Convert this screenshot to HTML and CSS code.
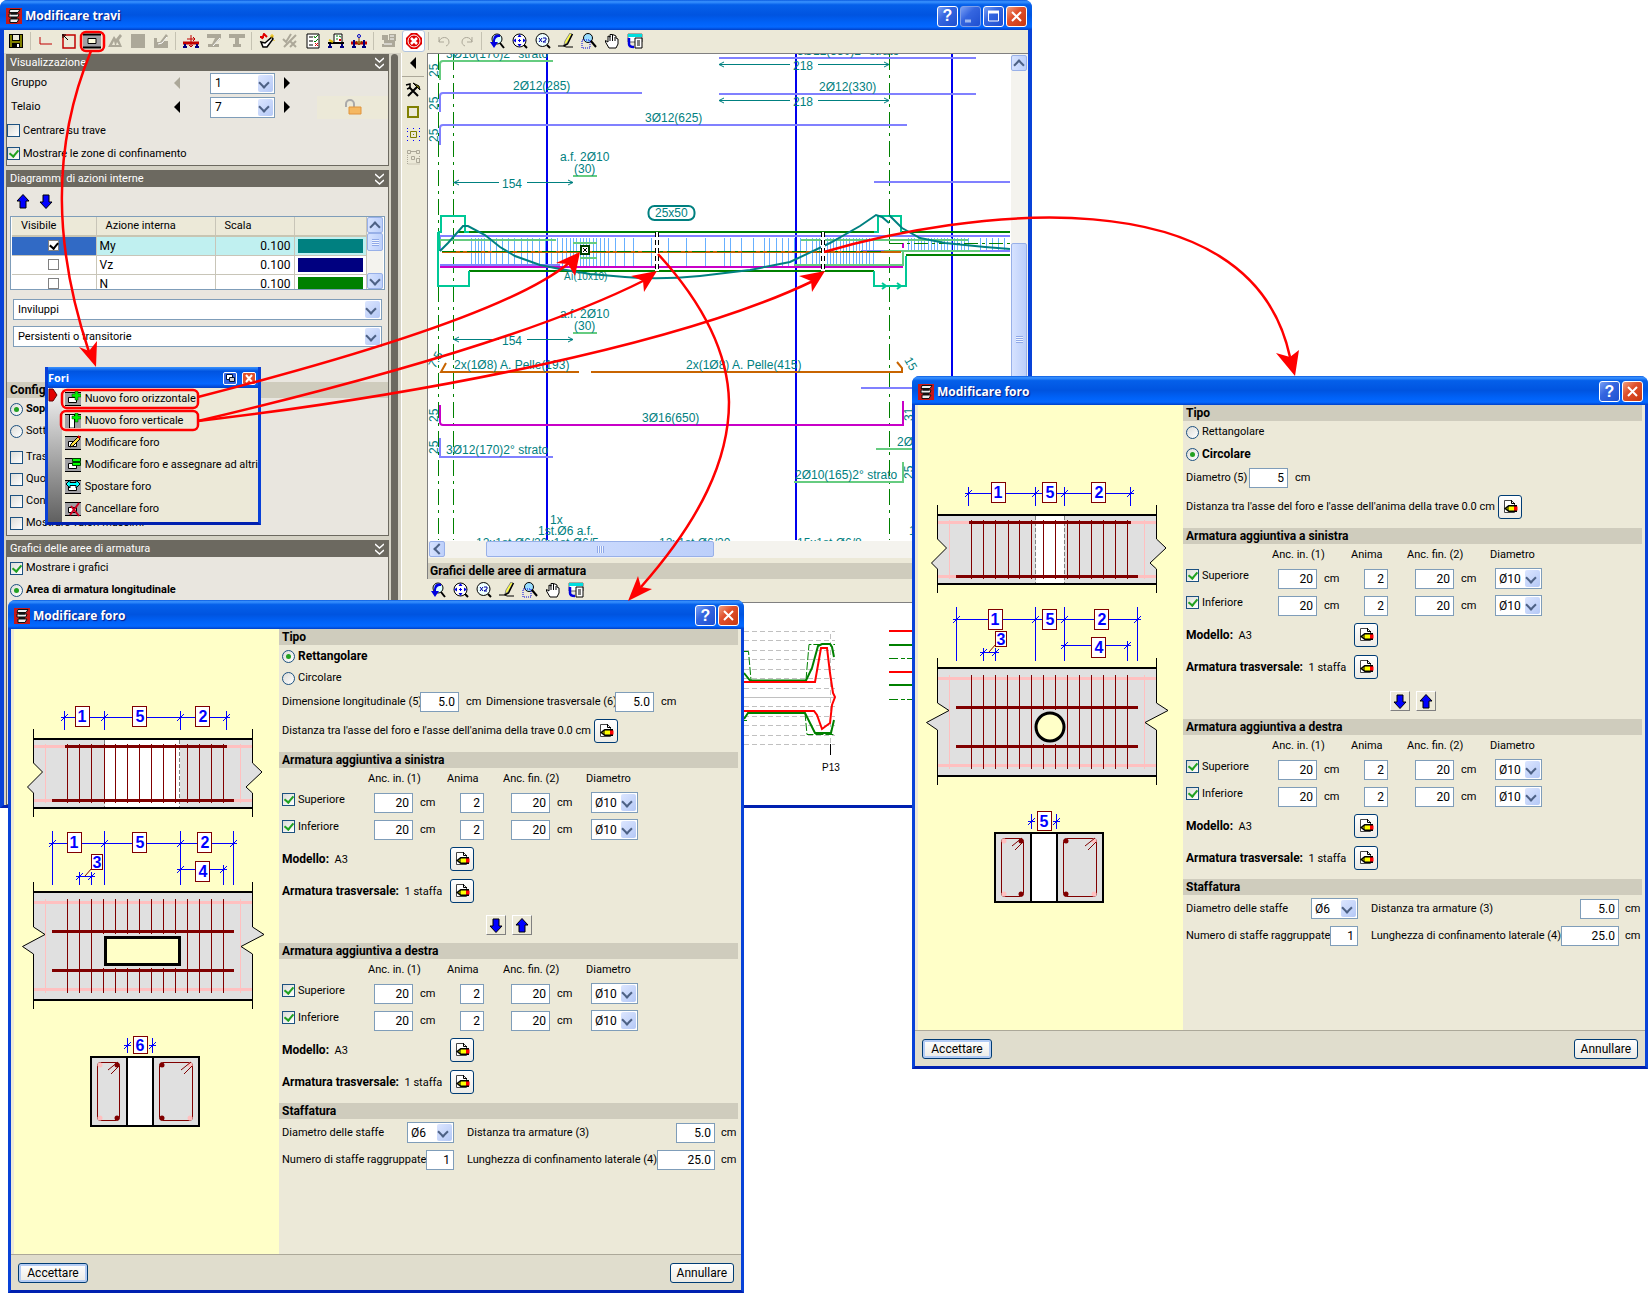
FILE: index.html
```html
<!DOCTYPE html>
<html lang="it">
<head>
  <meta charset="UTF-8">
  <meta name="viewport" content="width=device-width, initial-scale=1.0">
  <title>Modificare travi</title>
  <link rel="stylesheet" href="styles.css">
</head>
<body>

<!-- shared icons and drawing parts -->
<svg class="defs" width="0" height="0" aria-hidden="true">
  <defs>
    <symbol id="i-app" viewBox="0 0 16 16"><rect width="16" height="16" fill="#c81818"/><path d="M4 1.500h10l-2 3H3zM3 6h10l-1 3H3zM4 11h9l-2 3.500H4z" fill="#eee" stroke="#111"/><path d="M5 5.500h6M5 10h6" stroke="#111" stroke-width="2"/></symbol>
    <symbol id="i-save" viewBox="0 0 16 16"><path d="M1 1h14v14H1z" fill="#000"/><path d="M2 2h2v6h8V2h2v12h-2v-4H4v4H2z" fill="#808000"/><path d="M5 2h6v5H5z" fill="#ece9d8"/><path d="M9 11h2v3H9z" fill="#fff"/></symbol>
    <symbol id="i-ell" viewBox="0 0 16 16"><path d="M2 4v7h12" fill="none" stroke="#c00000"/></symbol>
    <symbol id="i-panel" viewBox="0 0 16 16"><path d="M2 2h12v13H2z" fill="none" stroke="#c00000" stroke-width="1.500"/><path d="M1 2h4M2 1v4M3 3l4 4" stroke="#000"/></symbol>
    <symbol id="i-hole" viewBox="0 0 18 16"><path d="M0 1h18v14H0z" fill="#a0a0a4"/><path d="M0 1.500h18M0 14.500h18" stroke="#000" stroke-width="2"/><path d="M5 5.500h8v5H5z" fill="#ffffe0" stroke="#000"/></symbol>
    <symbol id="i-g1" viewBox="0 0 16 16"><path d="M1 14L7 3l2 3 4-5 2 2-3 4 3 7zM5 12h3l-1-4zM10 9l-1 3h3z" fill="#aca899" fill-rule="evenodd"/></symbol>
    <symbol id="i-g2" viewBox="0 0 16 16"><path d="M1 1h14v14H1z" fill="#aca899"/></symbol>
    <symbol id="i-g3" viewBox="0 0 16 16"><path d="M1 5h3v4h3l6-8 2 2-4 5h4v7H1z" fill="#aca899"/><path d="M5 11l4-1 5-6" stroke="#fff" fill="none"/></symbol>
    <symbol id="i-beam" viewBox="0 0 16 16"><path d="M0 10h16" stroke="#c00000" stroke-width="3"/><path d="M2 11v3M0 14h4M14 11v3M12 14h4" stroke="#000080" stroke-width="2"/><path d="M8 2v12M4 6h7M10 4l2 2-2 2M6 12l2 2 2-2" stroke="#c00000" fill="none"/></symbol>
    <symbol id="i-g4" viewBox="0 0 16 16"><path d="M1 1h14v4l-6 6h4v3H2v-3h4l3-6H1z" fill="#aca899"/><path d="M7 13L14 5" stroke="#fff"/></symbol>
    <symbol id="i-g5" viewBox="0 0 16 16"><path d="M0 1h16v4h-6v6h2v3H4v-3h2V5H0z" fill="#aca899"/></symbol>
    <symbol id="i-wand" viewBox="0 0 16 16"><path d="M2 9l4 1 7-6 1 2-6 8H4z" fill="#fff" stroke="#000" stroke-width="1.500"/><path d="M3 6l2-5 3 3M1 4h4" stroke="#e00000" stroke-width="2" fill="none"/><path d="M13 1v4M11 3h4M15 7v1" stroke="#f0c000"/></symbol>
    <symbol id="i-g6" viewBox="0 0 16 16"><path d="M1 6l3 3 5-8M2 14L14 2M8 8l6 6M14 8l-6 6" stroke="#aca899" stroke-width="2" fill="none"/></symbol>
    <symbol id="i-list" viewBox="0 0 16 16"><path d="M2 1h12v14H2z" fill="#fff" stroke="#000"/><path d="M4 4h4M4 8h4M4 12h4" stroke="#000"/><path d="M9 3l1 2 3-3M9 8l1 1 3-3" stroke="#008000" fill="none"/><path d="M10 10l3 3M13 10l-3 3" stroke="#e00000"/></symbol>
    <symbol id="i-list2" viewBox="0 0 16 16"><path d="M6 1h8v9H6z" fill="#fff" stroke="#000"/><path d="M8 3h2M8 6h2M11 3l2 1" stroke="#008000"/><path d="M11 6l2 2M13 6l-2 2" stroke="#e00000"/><path d="M0 10h16" stroke="#000" stroke-width="2"/><path d="M2 11v3M0 14h4M14 11v3M12 14h4" stroke="#000080" stroke-width="2"/><path d="M1 7l4 2" stroke="#e0c000" stroke-width="2"/></symbol>
    <symbol id="i-load" viewBox="0 0 16 16"><path d="M0 10h16" stroke="#c00000" stroke-width="3"/><path d="M3 7v7M13 7v7M1 14h4M11 14h4" stroke="#000080" stroke-width="2"/><path d="M8 5v7M5 8l3 4 3-4" stroke="#804000" fill="#c0a040"/><circle cx="8" cy="3" r="1.500" fill="none" stroke="#0000c0"/></symbol>
    <symbol id="i-g7" viewBox="0 0 16 16"><path d="M1 2h6v5h7v7H1v-3h2V7H1zM8 1h7v7H8z" fill="#aca899"/><path d="M9 3h4M9 6h4M3 11h8" stroke="#fff"/></symbol>
    <symbol id="i-stop" viewBox="0 0 16 16"><path d="M5 0h6l5 5v6l-5 5H5l-5-5V5z" fill="#e00000"/><circle cx="8" cy="8" r="6" fill="none" stroke="#fff"/><path d="M5 5l6 6M11 5l-6 6" stroke="#fff" stroke-width="2.500"/></symbol>
    <symbol id="i-undo" viewBox="0 0 16 16"><path d="M3 4v5h5M3 9c1-6 10-6 10 0 0 2-1 3-3 4" stroke="#aca899" fill="none"/></symbol>
    <symbol id="i-redo" viewBox="0 0 16 16"><path d="M13 4v5H8M13 9C12 3 3 3 3 9c0 2 1 3 3 4" stroke="#aca899" fill="none"/></symbol>
    <symbol id="i-zprev" viewBox="0 0 16 16"><circle cx="8" cy="6" r="5" fill="#dff" stroke="#000"/><path d="M11 10l4 5" stroke="#000" stroke-width="2"/><path d="M11 2C5 0 4 5 4 9H1l4 6 4-6H6c0-3 1-5 5-5z" fill="#0000e0"/></symbol>
    <symbol id="i-zall" viewBox="0 0 16 16"><circle cx="7.500" cy="7.500" r="6.500" fill="#fff" stroke="#000"/><path d="M12 12l3 3" stroke="#000" stroke-width="2"/><path d="M7.500 1l2 3h-4zM7.500 14l2-3h-4zM1 7.500l3-2v4zM14 7.500l-3-2v4z" fill="#0000e0"/><path d="M6 7.500h3M7.500 6v3" stroke="#0000e0"/></symbol>
    <symbol id="i-z2" viewBox="0 0 16 16"><circle cx="7.500" cy="7" r="6.500" fill="#eff" stroke="#000"/><path d="M12 12l3 3" stroke="#000" stroke-width="2"/><path d="M4 5l3 4M7 5L4 9M8 5h3v2L8 9h3" stroke="#0000a0" fill="none"/></symbol>
    <symbol id="i-pen" viewBox="0 0 16 16"><path d="M12 0l2 1-5 9-3 2 1-4z" fill="#ffff40" stroke="#888"/><path d="M14.500 1l-5 10-4 2" stroke="#000" stroke-width="1.500" fill="none"/><path d="M0 13h6l2 1h7" stroke="#000" fill="none"/></symbol>
    <symbol id="i-zwin" viewBox="0 0 16 16"><circle cx="7" cy="5" r="4.500" fill="#9df" stroke="#000"/><path d="M10 8l5 6" stroke="#000" stroke-width="2"/><path d="M1 7h8v8H1z" fill="none" stroke="#0000e0" stroke-dasharray="1 1"/></symbol>
    <symbol id="i-hand" viewBox="0 0 16 16"><path d="M5 15L1.500 9V7.500L4 9V3l2 1V1.500h2l2 .500 2 1v2l2 1v5l-2 4z" fill="#fff" stroke="#000"/><path d="M6 3v5M8.500 2v6M11 4v4" stroke="#000"/></symbol>
    <symbol id="i-win" viewBox="0 0 16 16"><path d="M1 1h14v8H1z" fill="#fff" stroke="#666"/><path d="M1 1h14v3H1z" fill="#00dede"/><path d="M8 5h7v10H8z" fill="#fff" stroke="#000"/><path d="M10 8h3M10 10h3M10 12h3" stroke="#000"/><path d="M2 5v6c0 3 3 3 5 3" stroke="#0000e0" stroke-width="2.500" fill="none"/></symbol>
    <symbol id="i-edit" viewBox="0 0 16 16"><path d="M2.500 1.500h7l3 3v9h-10z" fill="#fff" stroke="#444"/><path d="M9.500 1v3.500H13" fill="none" stroke="#000"/><path d="M2 9.500L6.500 6H15v7H6.500z" fill="#000"/><path d="M7 7.500h5v4H7z" fill="#ff0"/><path d="M12 7.500h3.500v4H12z" fill="#f00"/><path d="M4 9.500l3-2v4z" fill="#808000"/></symbol>
    <symbol id="i-up" viewBox="0 0 14 15"><path d="M7 .500L13 7h-3v7H4V7H1z" fill="#00f" stroke="#000"/></symbol>
    <symbol id="i-down" viewBox="0 0 14 15"><path d="M7 14.500L1 8h3V1h6v7h3z" fill="#00f" stroke="#000"/></symbol>
    <symbol id="i-base" viewBox="0 0 16 16"><path d="M0 1h16v14H0z" fill="#a0a0a4"/><path d="M0 1.500h16M0 14.500h16" stroke="#000"/><path d="M3.500 6.500h8v5h-8z" fill="#fff" stroke="#000"/></symbol>
    <symbol id="i-plus" viewBox="0 0 16 16"><path d="M10 0h3v3h3v3h-3v3h-3V6H7V3h3z" fill="#0e0" stroke="#004000" stroke-width=".5"/></symbol>
    <symbol id="i-fold" viewBox="0 0 9 12"><path d="M0 1l4.500 4L9 1M0 7l4.500 4L9 7" fill="none" stroke="#fff" stroke-width="1.500"/></symbol>
    <symbol id="i-close" viewBox="0 0 19 19"><path d="M5 5l9 9M14 5l-9 9" stroke="#fff" stroke-width="2"/></symbol>

    <g id="beam-top">
      <path d="M33.500 739H252.500V763L262 772L246 787L252.500 793V808H33.500V793L27.500 787L42.500 772L33.500 763z" fill="#e0e0e0"/>
      <path d="M34 746.500H252M34 800.500H252" stroke="#ffc0c0" stroke-width="3"/>
      <path d="M45.500 744V803M240.500 744V803" stroke="#ffc0c0"/>
    </g>
    <g id="beam-top-bars">
      <path d="M67.500 744V803M79.500 744V803M91.500 744V803M104.500 744V803M115.500 744V803M127.500 744V803M139.500 744V803M151.500 744V803M163.500 744V803M175.500 744V803M187.500 744V803M199.500 744V803M211.500 744V803M223.500 744V803" stroke="#800000"/>
      <path d="M65 746.500H227M52 800.500H234" stroke="#800000" stroke-width="3"/>
      <path d="M33 739H253M33 808H253" stroke="#000" stroke-width="2"/>
      <path d="M33.500 729V763L42.500 772L27.500 787L33.500 793V817M252.500 729V763L262 772L246 787L252.500 793V817" fill="none" stroke="#000"/>
    </g>
    <g id="beam-side">
      <path d="M33.500 892H252.500V927L264 934.500L241 946.500L252.500 954V1000H33.500V954L22.500 946.500L45 934.500L33.500 927z" fill="#e0e0e0"/>
      <path d="M34 902.500H252M34 989.500H252" stroke="#ffc0c0" stroke-width="3"/>
      <path d="M45.500 899V993M240.500 899V993" stroke="#ffc0c0"/>
      <path d="M67.500 899V993M79.500 899V993M91.500 899V993M187.500 899V993M199.500 899V993M211.500 899V993M223.500 899V993" stroke="#800000"/>
      <path d="M139.500 899V934M151.500 899V934M139.500 968V993M151.500 968V993" stroke="#800000"/>
      <path d="M52 931.500H234M52 970.500H234" stroke="#800000" stroke-width="3"/>
      <path d="M33 892H253M33 1000H253" stroke="#000" stroke-width="2"/>
      <path d="M33.500 882V927L45 934.500L22.500 946.500L33.500 954V1009M252.500 882V927L264 934.500L241 946.500L252.500 954V1009" fill="none" stroke="#000"/>
      <path d="M76 876.500H95M79.500 872V885M91.500 872V885M76 880l7-7M88 880l7-7" stroke="#00f"/>
      <path d="M85 876L92 868" stroke="#800000"/>
    </g>
    <g id="section">
      <path d="M91 1057H199V1126H91z" fill="#e0e0e0" stroke="#000" stroke-width="2"/>
      <path d="M127 1057H153V1126H127z" fill="#fff" stroke="#000" stroke-width="2"/>
      <rect x="97.500" y="1062.500" width="22" height="58" rx="3" fill="none" stroke="#800000"/>
      <rect x="159.500" y="1062.500" width="33" height="58" rx="3" fill="none" stroke="#800000"/>
      <g fill="#ffc0c0"><circle cx="100" cy="1065" r="2.500"/><circle cx="100" cy="1118" r="2.500"/><circle cx="190" cy="1065" r="2.500"/><circle cx="190" cy="1118" r="2.500"/></g>
      <g fill="#800000"><circle cx="117" cy="1065" r="2.500"/><circle cx="117" cy="1118" r="2.500"/><circle cx="162" cy="1065" r="2.500"/><circle cx="162" cy="1118" r="2.500"/></g>
      <path d="M118 1062L108 1070M119 1066L111 1074M191 1062L181 1070M192 1066L184 1074" stroke="#800000"/>
      <path d="M127.500 1038V1053M152.500 1038V1053M124 1045.500H131M149 1045.500H156M124 1049l7-7M149 1049l7-7" stroke="#00f"/>
    </g>
  </defs>
</svg>

<main class="desktop">

  <!-- main window -->
  <section class="window main-window">
    <header class="titlebar">
      <svg class="app-icon"><use href="#i-app"/></svg>
      <h1>Modificare travi</h1>
      <button class="caption-btn" aria-label="Aiuto">?</button>
      <button class="caption-btn dim-btn" aria-label="Riduci"><svg width="19" height="19"><path d="M4 14h6" stroke="#9db8f0" stroke-width="3"/></svg></button>
      <button class="caption-btn" aria-label="Ingrandisci"><svg width="19" height="19"><path d="M4.500 5h10v9h-10z" fill="none" stroke="#fff"/><path d="M4 5h11" stroke="#fff" stroke-width="3"/></svg></button>
      <button class="caption-btn close" aria-label="Chiudi"><svg width="19" height="19"><use href="#i-close"/></svg></button>
    </header>

    <div class="toolbar top-toolbar">
      <button aria-label="Salva"><svg><use href="#i-save"/></svg></button>
      <i class="sep"></i>
      <button aria-label="Linea"><svg><use href="#i-ell"/></svg></button>
      <button aria-label="Pannello"><svg><use href="#i-panel"/></svg></button>
      <button aria-label="Fori"><svg class="wide"><use href="#i-hole"/></svg></button>
      <button aria-label="Sezione" disabled><svg><use href="#i-g1"/></svg></button>
      <button aria-label="Area" disabled><svg><use href="#i-g2"/></svg></button>
      <button aria-label="Modifica" disabled><svg><use href="#i-g3"/></svg></button>
      <i class="sep"></i>
      <button aria-label="Trave"><svg><use href="#i-beam"/></svg></button>
      <button aria-label="Profilo" disabled><svg><use href="#i-g4"/></svg></button>
      <button aria-label="Appoggio" disabled><svg><use href="#i-g5"/></svg></button>
      <i class="sep"></i>
      <button aria-label="Dimensionare"><svg><use href="#i-wand"/></svg></button>
      <button aria-label="Verificare" disabled><svg><use href="#i-g6"/></svg></button>
      <button aria-label="Elenco"><svg><use href="#i-list"/></svg></button>
      <button aria-label="Elenco travi"><svg><use href="#i-list2"/></svg></button>
      <button aria-label="Carichi"><svg><use href="#i-load"/></svg></button>
      <i class="sep"></i>
      <button aria-label="Stampa" disabled><svg><use href="#i-g7"/></svg></button>
      <button class="stop" aria-label="Errori"><svg><use href="#i-stop"/></svg></button>
      <i class="sep"></i>
      <button aria-label="Annulla" disabled><svg><use href="#i-undo"/></svg></button>
      <button aria-label="Ripeti" disabled><svg><use href="#i-redo"/></svg></button>
      <i class="sep"></i>
      <button aria-label="Vista precedente"><svg><use href="#i-zprev"/></svg></button>
      <button aria-label="Vista completa"><svg><use href="#i-zall"/></svg></button>
      <button aria-label="Zoom x2"><svg><use href="#i-z2"/></svg></button>
      <button aria-label="Ridisegna"><svg><use href="#i-pen"/></svg></button>
      <button aria-label="Zoom finestra"><svg><use href="#i-zwin"/></svg></button>
      <button aria-label="Sposta"><svg><use href="#i-hand"/></svg></button>
      <button aria-label="Finestre"><svg><use href="#i-win"/></svg></button>
    </div>

    <div class="workspace">
      <aside class="sidebar">
        <div class="groups">
          <section class="group">
            <h2>Visualizzazione <svg width="9" height="12"><use href="#i-fold"/></svg></h2>
            <div class="nav-row">
              <label for="gruppo">Gruppo</label>
              <button class="prev off" aria-label="Gruppo precedente"></button>
              <span class="combo"><select id="gruppo"><option>1</option></select></span>
              <button class="next" aria-label="Gruppo successivo"></button>
            </div>
            <div class="nav-row">
              <label for="telaio">Telaio</label>
              <button class="prev" aria-label="Telaio precedente"></button>
              <span class="combo"><select id="telaio"><option>7</option></select></span>
              <button class="next" aria-label="Telaio successivo"></button>
              <button class="lock" aria-label="Blocca"><svg width="18" height="16"><path d="M2 8V5a4 4 0 0 1 8 0v3" fill="none" stroke="#aaa" stroke-width="2"/><path d="M5 8h12v7H5z" fill="#f5b860" stroke="#e0943c"/></svg></button>
            </div>
            <label class="check"><input type="checkbox">Centrare su trave</label>
            <label class="check"><input type="checkbox" checked>Mostrare le zone di confinamento</label>
          </section>

          <section class="group">
            <h2>Diagrammi di azioni interne <svg width="9" height="12"><use href="#i-fold"/></svg></h2>
            <div class="order">
              <button aria-label="Su"><svg width="14" height="15"><use href="#i-up"/></svg></button>
              <button aria-label="Giù"><svg width="14" height="15"><use href="#i-down"/></svg></button>
            </div>
            <div class="table-box">
              <div class="table-view">
                <table>
                  <thead><tr><th>Visibile</th><th>Azione interna</th><th>Scala</th><th></th></tr></thead>
                  <tbody>
                    <tr class="selected"><td><input type="checkbox" aria-label="My" checked></td><td>My</td><td>0.100</td><td><i class="c-teal"></i></td></tr>
                    <tr><td><input type="checkbox" aria-label="Vz"></td><td>Vz</td><td>0.100</td><td><i class="c-navy"></i></td></tr>
                    <tr><td><input type="checkbox" aria-label="N"></td><td>N</td><td>0.100</td><td><i class="c-green"></i></td></tr>
                  </tbody>
                </table>
              </div>
              <div class="scroll-v"><b class="arrow up"></b><b class="thumb small"></b><b class="arrow down"></b></div>
            </div>
            <span class="combo long"><select aria-label="Tipo di risultati"><option>Inviluppi</option></select></span>
            <span class="combo long"><select aria-label="Situazione"><option>Persistenti o transitorie</option></select></span>
            <h3>Config</h3>
            <div class="config">
              <label class="check on"><input type="radio" name="pos" checked>Sop</label>
              <label class="check"><input type="radio" name="pos">Sott</label>
            </div>
            <div class="config checks">
              <label class="check"><input type="checkbox">Tras</label>
              <label class="check"><input type="checkbox">Quo</label>
              <label class="check"><input type="checkbox">Con</label>
              <label class="check"><input type="checkbox">Mostrare valori massimi</label>
            </div>
          </section>

          <section class="group last">
            <h2>Grafici delle aree di armatura <svg width="9" height="12"><use href="#i-fold"/></svg></h2>
            <div class="config">
              <label class="check"><input type="checkbox" checked>Mostrare i grafici</label>
              <label class="check on"><input type="radio" name="area" checked>Area di armatura longitudinale</label>
            </div>
          </section>
        </div>
        <div class="side-scroll"></div>
      </aside>

      <nav class="side-tools">
        <button aria-label="Nascondi"><svg width="16" height="16"><path d="M11 2v12L5 8z"/></svg></button>
        <hr>
        <button aria-label="Configurazione"><svg width="16" height="16"><path d="M3 14L13 4M13 14L4 5" stroke="#000" stroke-width="2"/><path d="M8 1l6 3 1 4-3-3z" fill="#808000" stroke="#000"/><path d="M1 3l4-1v4L2 7" fill="none" stroke="#000" stroke-width="1.500"/></svg></button>
        <button aria-label="Riquadro"><svg width="16" height="16"><path d="M3 3h10v10H3z" fill="none" stroke="#808000" stroke-width="2"/></svg></button>
        <button aria-label="Griglia"><svg width="16" height="16"><path d="M5.500 5.500h6v6h-6z" fill="none" stroke="#808000"/><path d="M8 8h1v1H8z" fill="#808000"/><path d="M2 2.500h13M2 14.500h13" stroke="#00f" stroke-dasharray="1 5"/><path d="M2.500 5v6M14.500 5v6" stroke="#00f" stroke-dasharray="1 4"/></svg></button>
        <button aria-label="Selezione" disabled><svg width="16" height="17"><path d="M2.500 2.500h3v3h-3zM11.500 2.500h3v3h-3zM6.500 8.500h3v3h-3zM11.500 10.500h3v4h-3z" fill="none" stroke="#aca899"/><path d="M2.500 7v9h12V7" fill="none" stroke="#aca899" stroke-dasharray="1 1"/><path d="M5 3.500h6" stroke="#aca899"/></svg></button>
      </nav>

      <div class="views">
        <div class="canvas-row">
          <!-- beam elevation -->
          <svg class="canvas" role="img" aria-label="Armatura della trave">
            <g transform="translate(-428 -54)">
              <path class="blue" d="M547 54V540M796 54V540M952 54V540"/>
              <path class="axis" d="M438.500 54V540M453.500 54V540M889.500 54V540" stroke-dasharray="16 5 3 5"/>

              <path class="mint" d="M553 61H443Q440 61 440 64V80M573 176H597M573 333H597M876 449H912M794 482H903V462"/>
              <path class="lilac" d="M642 93H443Q440 93 440 96V112M907 125H443Q440 125 440 128V145M719 58H976M719 94H976M874 182H1010M861 388H912M440 438V457H553"/>
              <path class="purple" d="M440 405V422Q440 425 443 425H903V401"/>
              <path class="rust" d="M446 363L441 372H579M591 372H902V368L897 362"/>

              <g class="dims">
                <path d="M719 64.500H790M818 64.500H889M719 100.500H790M818 100.500H889M453 182.500H499M527 182.500H573M453 339.500H499M527 339.500H573"/>
                <path d="M724 62l-5 2.500 5 2.500M884 62l5 2.500-5 2.500M724 98l-5 2.500 5 2.500M884 98l5 2.500-5 2.500M459 180l-5 2.500 5 2.500M568 180l5 2.500-5 2.500M459 337l-5 2.500 5 2.500M568 337l5 2.500-5 2.500"/>
              </g>

              <g class="cad">
                <text x="446" y="58">3Ø16(170)2° strato</text>
                <text x="797" y="55">3Ø12(330)2° strato</text>
                <text x="513" y="90">2Ø12(285)</text>
                <text x="819" y="91">2Ø12(330)</text>
                <text x="645" y="122">3Ø12(625)</text>
                <text x="793" y="70">218</text>
                <text x="793" y="106">218</text>
                <text x="560" y="161">a.f. 2Ø10</text>
                <text x="574" y="173">(30)</text>
                <text x="502" y="188">154</text>
                <text x="655" y="217">25x50</text>
                <text x="560" y="318">a.f. 2Ø10</text>
                <text x="574" y="330">(30)</text>
                <text x="502" y="345">154</text>
                <text x="454" y="369">2x(1Ø8) A. Pelle(193)</text>
                <text x="686" y="369">2x(1Ø8) A. Pelle(415)</text>
                <text x="642" y="422">3Ø16(650)</text>
                <text x="446" y="454">3Ø12(170)2° strato</text>
                <text x="897" y="446">2Ø10</text>
                <text x="795" y="479">2Ø10(165)2° strato</text>
                <text x="550" y="524">1x</text>
                <text x="538" y="535">1st.Ø6 a.f.</text>
                <text x="909" y="535">1x</text>
                <text x="476" y="547">12x1st.Ø6/20x1st.Ø6/5</text>
                <text x="659" y="547">12x1st.Ø6/20</text>
                <text x="797" y="547">15x1st.Ø6/8</text>
                <text transform="translate(438 77) rotate(-90)">25</text>
                <text transform="translate(438 110) rotate(-90)">25</text>
                <text transform="translate(438 142) rotate(-90)">25</text>
                <text transform="translate(438 422) rotate(-90)">25</text>
                <text transform="translate(438 454) rotate(-90)">25</text>
                <text transform="translate(913 421) rotate(-90)">31</text>
                <text transform="translate(913 479) rotate(-90)">25</text>
                <text transform="translate(435 369) rotate(-60)">7.5</text>
                <text transform="translate(904 360) rotate(60)">15</text>
                <text class="small" x="564" y="280">Aí(10x10)</text>
              </g>
              <rect x="648.500" y="206" width="46" height="14" rx="6" fill="none" stroke="#008080" stroke-width="2"/>

              <!-- beam body with stirrups -->
              <path class="stirrups" d="M471.500 238V266M475.500 238V266M478.500 238V266M481.500 238V266M484.500 238V266M490.500 238V266M496.500 238V266M502.500 238V266M508.500 238V266M514.500 238V266M521.500 238V266M527.500 238V266M532.500 238V266M539.500 238V266M545.500 238V266M551.500 238V266M557.500 238V266M562.500 238V266M566.500 238V266M570.500 238V266M573.500 238V266M576.500 238V266M580.500 238V266M583.500 238V266M586.500 238V266M589.500 238V266M593.500 238V266M596.500 238V266M600.500 238V266M604.500 238V266M608.500 238V266M615.500 238V266M624.500 238V266M633.500 238V266M651.500 238V266M668.500 238V266M686.500 238V266M705.500 238V266M724.500 238V266M730.500 238V266M741.500 238V266M753.500 238V266M764.500 238V266M769.500 238V266M776.500 238V266M782.500 238V266M788.500 238V266M794.500 238V266M800.500 238V266M806.500 238V266M812.500 238V266M816.500 238V266M819.500 238V266M827.500 238V266M830.500 238V266M833.500 238V266M836.500 238V266M840.500 238V266M843.500 238V266M846.500 238V266M849.500 238V266M853.500 238V266M856.500 238V266M859.500 238V266M862.500 238V266M866.500 238V266M869.500 238V266M873.500 238V266"/>
              <path class="stirrups" d="M908.500 238V251M911.500 238V251M914.500 238V251M918.500 238V251M921.500 238V251M924.500 238V251M928.500 238V251M931.500 238V251M934.500 238V251M937.500 238V251M941.500 238V251M944.500 238V251M947.500 238V251M951.500 238V251M954.500 238V251M957.500 238V251M961.500 238V251M964.500 238V251M968.500 238V251M980.500 238V251M986.500 238V251M992.500 238V251M998.500 238V251M1004.500 238V251"/>
              <path class="lilac" d="M440 250V236H1010M440 265H560M861 251H1010"/>
              <path class="mint" d="M440 246V240H556M573 243H597M580 258H597M801 240H968M794 265H903V250M884 251H980"/>
              <path class="purple" d="M440 267H903M903 248V243"/>
              <path class="rust" d="M442 252H901"/>
              <path class="axis" d="M442 251.500H885M889 243.500H1010" stroke-dasharray="14 4 3 4"/>
              <path class="edge" d="M457 232H874M469 271H874M901 232H1010M906 255H1010"/>
              <path class="column" d="M439 251V232H441V216H465V232H469M438 232V286H469V271M437 286H470M874 232H878V216H901V232M874 271V286H906V256M873 286H907M882 283l4 3-4 3M897 283l4 3-4 3"/>
              <path class="moment" d="M440 251L448 243L463 226L468 226L485 235L500 247L515 256L540 265L560 269L590 274L625 277Q660 280 700 276L750 270L790 262L830 243L860 226L876 215L882 217L889 223M889 215L902 228L920 238L945 243L985 247L1010 249"/>
              <path d="M581 246h8v8h-8z" fill="#fff" stroke="#004000" stroke-width="2"/><path d="M583 248l4 4M587 248l-4 4" stroke="#000"/>
              <path d="M655 232h4v39h-4zM821 232h4v39h-4z" fill="#fff"/>
              <path d="M655.500 232V271M658.500 232V271M821.500 232V271M824.500 232V271" stroke="#000" stroke-dasharray="5 3"/>
            </g>
          </svg>
          <div class="scroll-v big"><b class="arrow up"></b><b class="thumb"></b></div>
        </div>
        <div class="scroll-h"><b class="arrow left"></b><b class="thumb"></b></div>
        <h2 class="view-title">Grafici delle aree di armatura</h2>
        <div class="toolbar view-toolbar">
          <button aria-label="Vista precedente"><svg><use href="#i-zprev"/></svg></button>
          <button aria-label="Vista completa"><svg><use href="#i-zall"/></svg></button>
          <button aria-label="Zoom x2"><svg><use href="#i-z2"/></svg></button>
          <button aria-label="Ridisegna"><svg><use href="#i-pen"/></svg></button>
          <button aria-label="Zoom finestra"><svg><use href="#i-zwin"/></svg></button>
          <button aria-label="Sposta"><svg><use href="#i-hand"/></svg></button>
          <button aria-label="Finestre"><svg><use href="#i-win"/></svg></button>
        </div>
        <!-- reinforcement area chart -->
        <svg class="chart" role="img" aria-label="Grafico delle aree di armatura">
          <g transform="translate(-428 -603)" fill="none">
            <path d="M744 631.500H835M744 640.500H835M744 650.500H835M744 659.500H835M744 669.500H835M744 678.500H835M744 688.500H835M744 706.500H835M744 716.500H835M744 725.500H835M744 735.500H835M744 744.500H835M830.500 634V744" stroke="#c0c0c0" stroke-dasharray="5 3"/>
            <path d="M744 697.500H835" stroke="#c0c0c0"/>
            <path d="M744 651.500H748.500L751 680M806 680L809 644.500H835M744 720.500H747M805 713L807 734.500H835" stroke="#008000" stroke-dasharray="8 2"/>
            <path d="M744 673L750 680.500H806L812 668L818 646L822 644H830L832 647L834 657M744 719L748 713H805L815 733H831L834 720" stroke="#008000" stroke-width="2"/>
            <path d="M744 682H815L821 648H827L830 673L833 693L835 697L832 705L830 723L822 729L817 715L814 711H744" stroke="#f00" stroke-width="2"/>
            <path d="M889 631H920M889 672H920" stroke="#f00" stroke-width="2"/>
            <path d="M889 645H920M889 685H920" stroke="#008000" stroke-width="2"/>
            <path d="M889 658.500H920M889 699.500H920" stroke="#008000" stroke-dasharray="9 3 4 2"/>
            <path d="M830.500 744V755" stroke="#000"/>
            <text x="822" y="771">P13</text>
          </g>
        </svg>
      </div>
    </div>
  </section>

  <!-- floating palette -->
  <section class="palette">
    <header>
      <h2>Fori</h2>
      <button aria-label="Ancora"><svg width="12" height="11"><path d="M2.500 1.500h6v5h-6z" fill="#fff" stroke="#013"/><path d="M5.500 4.500h5v4h-5z" fill="#ccc" stroke="#013"/></svg></button>
      <button class="close" aria-label="Chiudi"><svg width="12" height="11"><path d="M3 2l6 7M9 2L3 9" stroke="#fff" stroke-width="2"/></svg></button>
    </header>
    <div class="palette-body">
      <div class="palette-strip"><svg width="10" height="14"><path d="M1 1h4l4 6-4 6H1z" fill="#e00000" stroke="#600000"/></svg></div>
      <ul>
        <li><button><svg><use href="#i-base"/><use href="#i-plus"/></svg>Nuovo foro orizzontale</button></li>
        <li><button><svg><path d="M0 1h16v14H0z" fill="#a0a0a4"/><path d="M4 2h6v12H4z" fill="#fff"/><path d="M0 1.500h16M4.500 1v14M9.500 1v14" stroke="#000"/><use href="#i-plus"/></svg>Nuovo foro verticale</button></li>
        <li><button><svg><use href="#i-base"/><path d="M13 2l2 2-7 7-3 1 1-3z" fill="#ffe040" stroke="#000"/><path d="M13 1l2 2" stroke="#e00000" stroke-width="2"/></svg>Modificare foro</button></li>
        <li><button><svg><use href="#i-base"/><path d="M7.500 1.500h8v3h-8zM7.500 5.500h8v3h-8z" fill="#0f0" stroke="#004000"/></svg>Modificare foro e assegnare ad altri</button></li>
        <li><button><svg><use href="#i-base"/><path d="M1 5l4-4v2.500h6V1l4 4-4 4V6.500H5V9z" fill="#0ff" stroke="#000"/></svg>Spostare foro</button></li>
        <li><button><svg><use href="#i-base"/><path d="M6 5l8 10M14 2L5 14" stroke="#d00020" stroke-width="2"/></svg>Cancellare foro</button></li>
      </ul>
    </div>
  </section>

  <!-- rectangular hole -->
  <section class="window dialog rect-dialog">
    <header class="titlebar">
      <svg class="app-icon"><use href="#i-app"/></svg>
      <h1>Modificare foro</h1>
      <button class="caption-btn" aria-label="Aiuto">?</button>
      <button class="caption-btn close" aria-label="Chiudi"><svg width="19" height="19"><use href="#i-close"/></svg></button>
    </header>
    <div class="dialog-body">
      <svg class="drawing" role="img" aria-label="Schema del foro rettangolare">
        <g transform="translate(-14 -629)">
          <use href="#beam-top"/>
          <path d="M105 740H180V807H105z" fill="#fff"/>
          <path d="M104.500 740V807M179.500 740V807" stroke="#808080" stroke-dasharray="4 2"/>
          <use href="#beam-top-bars"/>
          <path class="dim" d="M61 717.500H230M64.500 711V730M104.500 711V730M180.500 711V730M226.500 711V730M61 721l7-7M101 721l7-7M177 721l7-7M223 721l7-7"/>
          <use href="#beam-side"/>
          <path d="M103.500 899V934M115.500 899V934M127.500 899V934M163.500 899V934M175.500 899V934M103.500 968V993M115.500 968V993M127.500 968V993M163.500 968V993M175.500 968V993" stroke="#800000"/>
          <path d="M105.500 937.500H179.500V964.500H105.500z" fill="#ffffc8" stroke="#000" stroke-width="3"/>
          <path class="dim" d="M49 843.500H237M52.500 831V885M104.500 831V885M180.500 831V885M233.500 831V885M49 847l7-7M101 847l7-7M177 847l7-7M230 847l7-7M177 869.500H227M223.500 865V885M177 873l7-7M220 873l7-7"/>
          <use href="#section"/>
          <g class="tags">
            <rect x="75.500" y="706.500" width="14" height="20"/><rect x="132.500" y="706.500" width="14" height="20"/><rect x="195.500" y="706.500" width="14" height="20"/>
            <rect x="67.500" y="832.500" width="14" height="20"/><rect x="132.500" y="832.500" width="14" height="20"/><rect x="197.500" y="832.500" width="14" height="20"/>
            <rect x="91.500" y="854.500" width="11" height="15"/><rect x="195.500" y="861.500" width="14" height="20"/><rect x="133.500" y="1036.500" width="14" height="17"/>
            <text x="82" y="722">1</text><text x="140" y="722">5</text><text x="203" y="722">2</text>
            <text x="74" y="848">1</text><text x="140" y="848">5</text><text x="205" y="848">2</text>
            <text x="97" y="868">3</text><text x="203" y="877">4</text><text x="140" y="1051">6</text>
          </g>
        </g>
      </svg>
      <form class="form">
        <h2>Tipo</h2>
        <label class="check on"><input type="radio" name="tipo1" checked>Rettangolare</label>
        <label class="check"><input type="radio" name="tipo1">Circolare</label>
        <div class="dim-row">
          <label class="w-long" for="dl1">Dimensione longitudinale (5)</label><input id="dl1" type="text" value="5.0"><span class="cm">cm</span>
          <label class="w-mid" for="dt1">Dimensione trasversale (6)</label><input id="dt1" type="text" value="5.0"><span class="cm">cm</span>
        </div>
        <div class="btn-row wide-gap"><span>Distanza tra l'asse del foro e l'asse dell'anima della trave 0.0 cm</span><button type="button" class="edit" aria-label="Modifica distanza"><svg><use href="#i-edit"/></svg></button></div>

        <h2>Armatura aggiuntiva a sinistra</h2>
        <div class="grid">
          <span></span><span>Anc. in. (1)</span><span>Anima</span><span>Anc. fin. (2)</span><span>Diametro</span>
          <label class="check"><input type="checkbox" checked>Superiore</label>
          <div class="f1"><input type="text" aria-label="Anc. in." value="20"><span class="cm">cm</span></div>
          <div class="f2"><input type="text" aria-label="Anima" value="2"></div>
          <div class="f3"><input type="text" aria-label="Anc. fin." value="20"><span class="cm">cm</span></div>
          <div class="f4"><span class="combo"><select aria-label="Diametro"><option>Ø10</option></select></span></div>
          <label class="check"><input type="checkbox" checked>Inferiore</label>
          <div class="f1"><input type="text" aria-label="Anc. in." value="20"><span class="cm">cm</span></div>
          <div class="f2"><input type="text" aria-label="Anima" value="2"></div>
          <div class="f3"><input type="text" aria-label="Anc. fin." value="20"><span class="cm">cm</span></div>
          <div class="f4"><span class="combo"><select aria-label="Diametro"><option>Ø10</option></select></span></div>
        </div>
        <div class="btn-row"><span><b>Modello:</b>&nbsp; A3</span><button type="button" class="edit" aria-label="Modifica modello"><svg><use href="#i-edit"/></svg></button></div>
        <div class="btn-row"><span><b>Armatura trasversale:</b>&nbsp; 1 staffa</span><button type="button" class="edit" aria-label="Modifica staffe"><svg><use href="#i-edit"/></svg></button></div>

        <div class="copy">
          <button type="button" aria-label="Copia in basso"><svg><use href="#i-down"/></svg></button>
          <button type="button" aria-label="Copia in alto"><svg><use href="#i-up"/></svg></button>
        </div>

        <h2>Armatura aggiuntiva a destra</h2>
        <div class="grid">
          <span></span><span>Anc. in. (1)</span><span>Anima</span><span>Anc. fin. (2)</span><span>Diametro</span>
          <label class="check"><input type="checkbox" checked>Superiore</label>
          <div class="f1"><input type="text" aria-label="Anc. in." value="20"><span class="cm">cm</span></div>
          <div class="f2"><input type="text" aria-label="Anima" value="2"></div>
          <div class="f3"><input type="text" aria-label="Anc. fin." value="20"><span class="cm">cm</span></div>
          <div class="f4"><span class="combo"><select aria-label="Diametro"><option>Ø10</option></select></span></div>
          <label class="check"><input type="checkbox" checked>Inferiore</label>
          <div class="f1"><input type="text" aria-label="Anc. in." value="20"><span class="cm">cm</span></div>
          <div class="f2"><input type="text" aria-label="Anima" value="2"></div>
          <div class="f3"><input type="text" aria-label="Anc. fin." value="20"><span class="cm">cm</span></div>
          <div class="f4"><span class="combo"><select aria-label="Diametro"><option>Ø10</option></select></span></div>
        </div>
        <div class="btn-row"><span><b>Modello:</b>&nbsp; A3</span><button type="button" class="edit" aria-label="Modifica modello"><svg><use href="#i-edit"/></svg></button></div>
        <div class="btn-row last"><span><b>Armatura trasversale:</b>&nbsp; 1 staffa</span><button type="button" class="edit" aria-label="Modifica staffe"><svg><use href="#i-edit"/></svg></button></div>

        <h2>Staffatura</h2>
        <div class="stirrup-row">
          <div><label for="ds1">Diametro delle staffe</label><span class="combo"><select id="ds1"><option>Ø6</option></select></span></div>
          <div><label for="da1">Distanza tra armature (3)</label><input id="da1" type="text" value="5.0"><span class="cm">cm</span></div>
        </div>
        <div class="stirrup-row">
          <div><label for="ns1">Numero di staffe raggruppate</label><input id="ns1" class="narrow" type="text" value="1"></div>
          <div><label for="lc1">Lunghezza di confinamento laterale (4)</label><input id="lc1" class="wide" type="text" value="25.0"><span class="cm">cm</span></div>
        </div>
      </form>
    </div>
    <footer><button class="push">Accettare</button><button class="push">Annullare</button></footer>
  </section>

  <!-- circular hole -->
  <section class="window dialog circ-dialog">
    <header class="titlebar">
      <svg class="app-icon"><use href="#i-app"/></svg>
      <h1>Modificare foro</h1>
      <button class="caption-btn" aria-label="Aiuto">?</button>
      <button class="caption-btn close" aria-label="Chiudi"><svg width="19" height="19"><use href="#i-close"/></svg></button>
    </header>
    <div class="dialog-body">
      <svg class="drawing" role="img" aria-label="Schema del foro circolare">
        <g transform="translate(-14 -629)">
          <use href="#beam-top"/>
          <path d="M132 740H160V807H132z" fill="#fff"/>
          <path d="M131.500 740V807M160.500 740V807" stroke="#808080" stroke-dasharray="4 2"/>
          <use href="#beam-top-bars"/>
          <path class="dim" d="M61 717.500H230M64.500 711V730M131.500 711V730M160.500 711V730M226.500 711V730M61 721l7-7M128 721l7-7M157 721l7-7M223 721l7-7"/>
          <use href="#beam-side"/>
          <path d="M103.500 899V993M115.500 899V993M127.500 899V993M163.500 899V993M175.500 899V993" stroke="#800000"/>
          <circle cx="146" cy="951" r="14" fill="#ffffc8" stroke="#000" stroke-width="3"/>
          <path class="dim" d="M49 843.500H237M52.500 831V885M131.500 831V885M160.500 831V885M233.500 831V885M49 847l7-7M128 847l7-7M157 847l7-7M230 847l7-7M157 869.500H227M223.500 865V885M157 873l7-7M220 873l7-7"/>
          <use href="#section"/>
          <g class="tags">
            <rect x="87.500" y="706.500" width="14" height="20"/><rect x="138.500" y="706.500" width="14" height="20"/><rect x="187.500" y="706.500" width="14" height="20"/>
            <rect x="84.500" y="833.500" width="14" height="20"/><rect x="138.500" y="833.500" width="14" height="20"/><rect x="190.500" y="833.500" width="14" height="20"/>
            <rect x="91.500" y="855.500" width="11" height="15"/><rect x="187.500" y="861.500" width="14" height="20"/><rect x="133.500" y="1035.500" width="14" height="19"/>
            <text x="94" y="722">1</text><text x="146" y="722">5</text><text x="195" y="722">2</text>
            <text x="91" y="849">1</text><text x="146" y="849">5</text><text x="198" y="849">2</text>
            <text x="97" y="869">3</text><text x="195" y="877">4</text><text x="140" y="1051">5</text>
          </g>
        </g>
      </svg>
      <form class="form">
        <h2>Tipo</h2>
        <label class="check"><input type="radio" name="tipo2">Rettangolare</label>
        <label class="check on"><input type="radio" name="tipo2" checked>Circolare</label>
        <div class="dim-row">
          <label class="w-short" for="di2">Diametro (5)</label><input id="di2" type="text" value="5"><span class="cm">cm</span>
        </div>
        <div class="btn-row wide-gap"><span>Distanza tra l'asse del foro e l'asse dell'anima della trave 0.0 cm</span><button type="button" class="edit" aria-label="Modifica distanza"><svg><use href="#i-edit"/></svg></button></div>

        <h2>Armatura aggiuntiva a sinistra</h2>
        <div class="grid">
          <span></span><span>Anc. in. (1)</span><span>Anima</span><span>Anc. fin. (2)</span><span>Diametro</span>
          <label class="check"><input type="checkbox" checked>Superiore</label>
          <div class="f1"><input type="text" aria-label="Anc. in." value="20"><span class="cm">cm</span></div>
          <div class="f2"><input type="text" aria-label="Anima" value="2"></div>
          <div class="f3"><input type="text" aria-label="Anc. fin." value="20"><span class="cm">cm</span></div>
          <div class="f4"><span class="combo"><select aria-label="Diametro"><option>Ø10</option></select></span></div>
          <label class="check"><input type="checkbox" checked>Inferiore</label>
          <div class="f1"><input type="text" aria-label="Anc. in." value="20"><span class="cm">cm</span></div>
          <div class="f2"><input type="text" aria-label="Anima" value="2"></div>
          <div class="f3"><input type="text" aria-label="Anc. fin." value="20"><span class="cm">cm</span></div>
          <div class="f4"><span class="combo"><select aria-label="Diametro"><option>Ø10</option></select></span></div>
        </div>
        <div class="btn-row"><span><b>Modello:</b>&nbsp; A3</span><button type="button" class="edit" aria-label="Modifica modello"><svg><use href="#i-edit"/></svg></button></div>
        <div class="btn-row"><span><b>Armatura trasversale:</b>&nbsp; 1 staffa</span><button type="button" class="edit" aria-label="Modifica staffe"><svg><use href="#i-edit"/></svg></button></div>

        <div class="copy">
          <button type="button" aria-label="Copia in basso"><svg><use href="#i-down"/></svg></button>
          <button type="button" aria-label="Copia in alto"><svg><use href="#i-up"/></svg></button>
        </div>

        <h2>Armatura aggiuntiva a destra</h2>
        <div class="grid">
          <span></span><span>Anc. in. (1)</span><span>Anima</span><span>Anc. fin. (2)</span><span>Diametro</span>
          <label class="check"><input type="checkbox" checked>Superiore</label>
          <div class="f1"><input type="text" aria-label="Anc. in." value="20"><span class="cm">cm</span></div>
          <div class="f2"><input type="text" aria-label="Anima" value="2"></div>
          <div class="f3"><input type="text" aria-label="Anc. fin." value="20"><span class="cm">cm</span></div>
          <div class="f4"><span class="combo"><select aria-label="Diametro"><option>Ø10</option></select></span></div>
          <label class="check"><input type="checkbox" checked>Inferiore</label>
          <div class="f1"><input type="text" aria-label="Anc. in." value="20"><span class="cm">cm</span></div>
          <div class="f2"><input type="text" aria-label="Anima" value="2"></div>
          <div class="f3"><input type="text" aria-label="Anc. fin." value="20"><span class="cm">cm</span></div>
          <div class="f4"><span class="combo"><select aria-label="Diametro"><option>Ø10</option></select></span></div>
        </div>
        <div class="btn-row"><span><b>Modello:</b>&nbsp; A3</span><button type="button" class="edit" aria-label="Modifica modello"><svg><use href="#i-edit"/></svg></button></div>
        <div class="btn-row last"><span><b>Armatura trasversale:</b>&nbsp; 1 staffa</span><button type="button" class="edit" aria-label="Modifica staffe"><svg><use href="#i-edit"/></svg></button></div>

        <h2>Staffatura</h2>
        <div class="stirrup-row">
          <div><label for="ds2">Diametro delle staffe</label><span class="combo"><select id="ds2"><option>Ø6</option></select></span></div>
          <div><label for="da2">Distanza tra armature (3)</label><input id="da2" type="text" value="5.0"><span class="cm">cm</span></div>
        </div>
        <div class="stirrup-row">
          <div><label for="ns2">Numero di staffe raggruppate</label><input id="ns2" class="narrow" type="text" value="1"></div>
          <div><label for="lc2">Lunghezza di confinamento laterale (4)</label><input id="lc2" class="wide" type="text" value="25.0"><span class="cm">cm</span></div>
        </div>
      </form>
    </div>
    <footer><button class="push">Accettare</button><button class="push">Annullare</button></footer>
  </section>

  <!-- red callouts -->
  <svg class="callouts" aria-hidden="true">
    <g fill="none" stroke="#f00" stroke-width="2.500">
      <rect x="81" y="32" width="23" height="19" rx="5"/>
      <rect x="62" y="390" width="136" height="18" rx="5"/>
      <rect x="61" y="411" width="137" height="19" rx="5"/>
      <path d="M91 51C50 150 55 250 89 352"/>
      <path d="M198 397Q500 320 569 263"/>
      <path d="M198 421C330 390 530 338 645 280"/>
      <path d="M198 421C420 395 680 345 813 281"/>
      <path d="M658 254C700 300 728 350 729 402C729 460 700 520 641 587"/>
      <path d="M824 252C960 212 1250 170 1290 357"/>
    </g>
    <g fill="#f00">
      <path d="M96 367L79 347L89 351L97 341z"/>
      <path d="M580 252L556 263L568 264L575 276z"/>
      <path d="M657 271L631 276L643 281L644 292z"/>
      <path d="M825 271L799 276L811 281L812 292z"/>
      <path d="M628 601L638 576L641 587L652 589z"/>
      <path d="M1295 376L1276 353L1290 357L1299 350z"/>
    </g>
  </svg>
</main>

</body>
</html>
```
FILE: styles.css
```css
* {
  box-sizing: border-box;
}
body {
  margin: 0;
  background: #fff;
  color: #000;
  font-family: Roboto, Arial, sans-serif;
  font-size: 11px;
  line-height: 14px;
}
h1, h2, h3, ul {
  margin: 0;
  padding: 0;
  list-style: none;
}
button, input, select {
  font: inherit;
  color: inherit;
  margin: 0;
  padding: 0;
}
button {
  border: 0;
  background: none;
  white-space: nowrap;
}
svg {
  display: block;
  flex: none;
}
.defs {
  position: absolute;
}
.desktop {
  position: relative;
  min-height: 100vh;
  overflow: hidden;
}

/* windows */
.window {
  position: absolute;
  display: flex;
  flex-direction: column;
  background: #ece9d8;
  border: 3px solid #0842d8;
  border-top: 0;
  border-bottom-color: #0020b0;
  border-radius: 8px 8px 0 0;
}
.main-window {
  left: 0;
  top: 0;
  width: 1032px;
  height: 808px;
  border-width: 0 4px 3px;
}
.rect-dialog {
  left: 8px;
  top: 600px;
}
.circ-dialog {
  left: 912px;
  top: 376px;
}
.dialog {
  width: 736px;
}
.titlebar {
  display: flex;
  align-items: center;
  gap: 2px;
  height: 29px;
  margin: 0 -3px;
  padding: 2px 5px 0 6px;
  border-radius: 7px 7px 0 0;
  background: linear-gradient(#0a5be0, #3a93ff 6%, #0560ea 16%, #0054e0 50%, #0062f8 75%, #0468ff 90%, #0040c8);
}
.main-window .titlebar {
  height: 30px;
  margin: 0 -4px;
}
.titlebar h1 {
  flex: 1;
  padding-left: 1px;
  color: #fff;
  font: bold 12px/16px "Open Sans", sans-serif;
  text-shadow: 1px 1px 1px #0a1883;
}
.app-icon {
  width: 16px;
  height: 16px;
}
.caption-btn {
  display: flex;
  align-items: center;
  justify-content: center;
  width: 21px;
  height: 21px;
  border: 1px solid #fff;
  border-radius: 3px;
  background: linear-gradient(135deg, #7aa0f4, #3566e0 40%, #1e4fd0);
  color: #fff;
  font: bold 16px/18px "Liberation Sans", Arial, sans-serif;
}
.caption-btn.dim-btn {
  border-color: #7f9fe8;
}
.caption-btn.close {
  background: linear-gradient(135deg, #f0a080, #e0502c 40%, #c83810);
}

/* toolbars */
.toolbar {
  display: flex;
  align-items: center;
  height: 23px;
  background: #ece9d8;
}
.top-toolbar {
  padding-bottom: 1px;
}
.toolbar button {
  display: flex;
  align-items: center;
  justify-content: center;
  width: 23px;
  height: 22px;
}
.toolbar svg {
  width: 16px;
  height: 16px;
}
.toolbar svg.wide {
  width: 18px;
}
.sep {
  flex: none;
  width: 4px;
  height: 18px;
  margin-left: 3px;
  border-left: 1px solid #c5c2b2;
}
.toolbar .stop {
  height: 22px;
  margin-left: 2px;
  border: 1px solid #b0c4e0;
  border-radius: 3px;
  background: #fff;
}

/* workspace */
.workspace {
  display: flex;
  flex: 1;
  min-height: 0;
}
.sidebar {
  display: flex;
  width: 397px;
  padding: 1px 0 0 2px;
  background: #d5d2c5;
}
.groups {
  display: flex;
  flex-direction: column;
  gap: 4px;
  width: 383px;
  overflow: hidden;
}
.side-scroll {
  width: 7px;
  margin-left: 2px;
  border-radius: 4px 4px 0 0;
  background: #6c6960;
}
.group {
  border: 1px solid #6c6960;
  border-top: 0;
  background: #e9e6df;
}
.group.last {
  flex: 1;
}
.group > h2 {
  display: flex;
  align-items: center;
  justify-content: space-between;
  height: 17px;
  padding: 0 4px 0 3px;
  background: #6c6960;
  color: #fff;
  font-size: 11px;
  font-weight: normal;
}
.nav-row {
  display: flex;
  align-items: center;
  height: 24px;
}
.nav-row label {
  width: 167px;
  padding-left: 4px;
}
.prev, .next {
  width: 36px;
  height: 12px;
}
.prev::before, .next::before {
  content: "";
  display: block;
  width: 0;
  border: 6px solid transparent;
  border-right-color: #000;
  border-left-width: 0;
}
.prev.off::before {
  border-right-color: #aca899;
}
.next {
  padding-left: 9px;
}
.next::before {
  border-left: 6px solid #000;
  border-right: 0;
}
.lock {
  display: flex;
  align-items: center;
  justify-content: center;
  flex: 1;
  height: 23px;
  margin-left: 6px;
  background: #ece9d8;
}
.check {
  display: flex;
  align-items: center;
  gap: 3px;
  height: 22px;
}
.check.on {
  font-weight: bold;
}
.group > .check {
  height: 23px;
}
.config .check {
  padding-left: 3px;
}
.config.checks {
  padding: 4px 0 1px;
}
input[type="checkbox"], input[type="radio"] {
  appearance: none;
  flex: none;
  display: flex;
  align-items: center;
  justify-content: center;
  width: 13px;
  height: 13px;
  border: 1px solid #1c5180;
  background: linear-gradient(135deg, #dcdcd7, #fff);
}
input[type="radio"] {
  border-radius: 50%;
}
input[type="radio"]:checked::after {
  content: "";
  width: 5px;
  height: 5px;
  border-radius: 50%;
  background: #21a121;
}
input[type="checkbox"]:checked::after {
  content: "";
  width: 4px;
  height: 7px;
  margin-bottom: 2px;
  border: solid #21a121;
  border-width: 0 2px 2px 0;
  transform: rotate(40deg);
}
.order {
  display: flex;
  align-items: center;
  gap: 9px;
  height: 29px;
  padding-left: 9px;
}

/* internal forces table */
.table-box {
  display: flex;
  width: 375px;
  height: 74px;
  margin: 0 0 9px 3px;
  padding: 0 1px;
  border: 1px solid #7f9db9;
  background: #fff;
}
.table-view {
  flex: 1;
  overflow: hidden;
}
table {
  width: 100%;
  border-collapse: collapse;
  table-layout: fixed;
}
th, td {
  height: 19px;
  padding: 0 3px;
  border-right: 1px solid #c8c5b8;
  border-bottom: 1px solid #c8c5b8;
  font-weight: normal;
  text-align: left;
}
th {
  background: #ece9d8;
  border-bottom: 2px solid #c8c5b2;
  padding-left: 9px;
}
th:nth-child(1) { width: 84px; }
th:nth-child(2) { width: 119px; }
th:nth-child(3) { width: 79px; }
td:nth-child(3) { text-align: right; }
td:nth-child(2), td:nth-child(3) { font-size: 12px; }
td input[type="checkbox"] {
  width: 11px;
  height: 11px;
  margin: 0 auto;
  border-color: #808080;
  background: #fff;
}
td input[type="checkbox"]:checked::after {
  border-color: #000;
  width: 4px;
  height: 6px;
}
td i {
  display: block;
  height: 14px;
}
.selected td {
  background: #c0f0f0;
}
.selected td:first-child {
  background: #316ac5;
}
.c-teal { background: #008080; }
.c-navy { background: #000080; }
.c-green { background: #008000; }

/* scroll bars */
.scroll-v, .scroll-h {
  display: flex;
  flex-direction: column;
  width: 16px;
  background: #f4f3ee;
}
.scroll-h {
  flex-direction: row;
  width: 100%;
  height: 17px;
  padding: 0 1px;
}
.arrow, .thumb {
  display: flex;
  align-items: center;
  justify-content: center;
  width: 16px;
  height: 16px;
  border: 1px solid #98b0e8;
  border-radius: 2px;
  background: linear-gradient(90deg, #d6e2ff, #bccffa);
}
.arrow::after {
  content: "";
  width: 6px;
  height: 6px;
  border: solid #4d6185;
  border-width: 2px 0 0 2px;
}
.arrow.up::after { transform: rotate(45deg); margin-top: 3px; }
.arrow.down::after { transform: rotate(225deg); margin-bottom: 3px; }
.arrow.left::after { transform: rotate(-45deg); margin-left: 3px; }
.arrow.down { margin-top: auto; }
.thumb::after {
  content: "";
  width: 7px;
  height: 7px;
  background: repeating-linear-gradient(#8fa8e8 0 1px, #eef4fe 1px 2px);
}
.thumb.small { height: 18px; }
.big .thumb {
  height: 192px;
  margin-top: 172px;
}
.big {
  padding-top: 1px;
  width: 17px;
}
.scroll-h .thumb {
  width: 228px;
  margin-left: 41px;
}
.scroll-h .thumb::after {
  background: repeating-linear-gradient(90deg, #8fa8e8 0 1px, #eef4fe 1px 2px);
}

/* combo boxes and fields */
.combo {
  position: relative;
  display: block;
  width: 65px;
  height: 21px;
}
.combo select {
  appearance: none;
  width: 100%;
  height: 100%;
  padding-left: 4px;
  border: 1px solid #7f9db9;
  border-radius: 0;
  background: #fff;
  font-size: 12px;
}
.combo::before {
  content: "";
  position: absolute;
  top: 2px;
  right: 2px;
  width: 15px;
  height: 17px;
  border-radius: 2px;
  background: linear-gradient(135deg, #dce6ff, #b4c8f6);
  pointer-events: none;
}
.combo::after {
  content: "";
  position: absolute;
  top: 6px;
  right: 7px;
  width: 6px;
  height: 6px;
  border: solid #4d6185;
  border-width: 0 2px 2px 0;
  transform: rotate(45deg);
  pointer-events: none;
}
.combo.long {
  width: 369px;
  margin: 0 0 6px 6px;
}
.combo.long select {
  font-size: 11px;
}
.group h3 {
  height: 16px;
  margin-top: 35px;
  padding-left: 3px;
  background: #cfccbd;
  font-size: 12px;
  line-height: 16px;
}
input[type="text"] {
  width: 39px;
  height: 20px;
  padding-right: 3px;
  border: 1px solid #7f9db9;
  background: #fff;
  font-size: 12px;
  text-align: right;
}
.cm {
  padding-left: 7px;
}

/* narrow tool column */
.side-tools {
  display: flex;
  flex-direction: column;
  align-items: center;
  gap: 6px;
  width: 26px;
  padding: 2px 3px 0 0;
  border-left: 1px solid #fff;
}
.side-tools hr {
  width: 22px;
  margin: -1px 0;
  border: 0;
  border-top: 1px solid #aca899;
}

/* views */
.views {
  display: flex;
  flex-direction: column;
  flex: 1;
  min-width: 0;
  border-left: 1px solid #808080;
}
.canvas-row {
  display: flex;
  height: 488px;
  border-top: 1px solid #808080;
}
.canvas {
  flex: 1;
  min-width: 0;
  height: 100%;
  background: #fff;
}
.blue { stroke: #00e; stroke-width: 2; }
.axis { stroke: #008000; }
.mint { fill: none; stroke: #66cc80; stroke-width: 2; }
.lilac { fill: none; stroke: #8080ff; stroke-width: 2; }
.purple { fill: none; stroke: #c800c8; stroke-width: 2; }
.rust { fill: none; stroke: #c86400; stroke-width: 2; }
.edge { stroke: #008000; stroke-width: 2; }
.column { fill: none; stroke: #00c896; stroke-width: 2; }
.moment { fill: none; stroke: #008080; stroke-width: 2; }
.stirrups { stroke: #68b0ff; }
.dims { fill: none; stroke: #008080; }
.cad {
  fill: #008080;
  font: 12px "Liberation Sans", Arial, sans-serif;
}
.cad .small {
  font-size: 10px;
}
.view-title {
  height: 16px;
  margin-top: 5px;
  padding-left: 2px;
  background: #cfccbd;
  font-size: 12px;
  line-height: 17px;
}
.view-toolbar {
  height: 22px;
  margin: 0 0 1px -2px;
}
.chart {
  flex: 1;
  width: 100%;
  min-height: 0;
  border-top: 1px solid #808080;
  background: #fff;
}
.chart text {
  fill: #000;
  font: 10px "Liberation Sans", Arial, sans-serif;
}

/* palette */
.palette {
  position: absolute;
  left: 45px;
  top: 367px;
  width: 216px;
  border: 3px solid #0840d8;
  border-top: 0;
  border-bottom-color: #0020b0;
  background: #ece9d8;
}
.palette header {
  display: flex;
  align-items: center;
  gap: 5px;
  height: 21px;
  padding: 1px 2px 0 0;
  background: linear-gradient(#3a93ff, #0054e0 20%, #0466ff 80%, #0040c8);
}
.palette h2 {
  flex: 1;
  color: #fff;
  font: bold 11px/14px "Open Sans", sans-serif;
}
.palette header button {
  width: 14px;
  height: 13px;
  border: 1px solid #fff;
  border-radius: 2px;
  background: #3566e0;
}
.palette header .close {
  background: #e0502c;
}
.palette-body {
  display: flex;
}
.palette-strip {
  width: 14px;
  background: linear-gradient(#f4f4f4, #606060);
}
.palette li button {
  display: flex;
  align-items: center;
  gap: 4px;
  height: 22px;
  padding-left: 3px;
}
.palette ul {
  padding-bottom: 2px;
}
.palette li svg {
  width: 16px;
  height: 16px;
}

/* hole dialogs */
.dialog-body {
  display: flex;
  height: 625px;
  padding-left: 3px;
}
.drawing {
  width: 265px;
  height: 625px;
  background: #ffffc8;
}
.dim {
  fill: none;
  stroke: #00f;
}
.tags rect {
  fill: #fff;
  stroke: #800000;
}
.tags text {
  fill: #00f;
  font: bold 16px "Liberation Sans", Arial, sans-serif;
  text-anchor: middle;
}
.form {
  flex: 1;
  min-width: 0;
  margin-right: 3px;
  white-space: nowrap;
}
.form h2 {
  height: 16px;
  padding-left: 3px;
  background: #cfccbd;
  font-size: 12px;
  line-height: 17px;
}
.form b {
  font-size: 12px;
}
.form .check, .dim-row, .btn-row, .grid, .stirrup-row {
  padding-left: 3px;
}
.form .check.on {
  font-size: 12px;
}
.dim-row {
  display: flex;
  align-items: center;
  height: 26px;
}
.w-long { width: 138px; }
.w-mid { width: 129px; }
.w-short { width: 63px; }
.dim-row .cm {
  width: 27px;
}
.btn-row {
  display: flex;
  align-items: center;
  height: 32px;
}
.btn-row span {
  width: 168px;
}
.btn-row.wide-gap span {
  width: 312px;
}
.btn-row.wide-gap, .btn-row.last {
  margin-bottom: 5px;
}
.edit {
  display: flex;
  align-items: center;
  justify-content: center;
  width: 24px;
  height: 24px;
  border: 1px solid #003c74;
  border-radius: 3px;
  background: linear-gradient(#fff, #ecebe6);
}
.edit svg {
  width: 16px;
  height: 16px;
}
.grid {
  display: grid;
  grid-template-columns: 86px 79px 56px 83px 1fr;
  grid-template-rows: 21px 27px 27px;
  align-items: center;
}
.grid .check {
  padding: 0 0 6px;
}
.grid div {
  display: flex;
  align-items: center;
}
.f1 { padding-left: 6px; }
.f2 { padding-left: 13px; }
.f3 { padding-left: 8px; }
.f4 { padding-left: 5px; }
.f2 input[type="text"] {
  width: 24px;
}
.form .combo {
  width: 47px;
}
.form .combo select {
  padding-left: 3px;
}
.copy {
  display: flex;
  align-items: center;
  gap: 6px;
  height: 36px;
  padding-left: 207px;
}
.copy button {
  display: flex;
  align-items: center;
  justify-content: center;
  width: 20px;
  height: 20px;
  border: 1px solid;
  border-color: #fff #808080 #808080 #fff;
}
.copy svg {
  width: 14px;
  height: 15px;
}
.stirrup-row {
  display: flex;
  gap: 13px;
  height: 27px;
  padding-right: 3px;
}
.stirrup-row div {
  display: flex;
  align-items: center;
  flex: 1;
  min-width: 0;
}
.stirrup-row div:first-child {
  flex: 0 0 172px;
}
.stirrup-row label {
  flex: 1;
  min-width: 0;
}
.stirrup-row .cm {
  width: 20px;
  padding-left: 6px;
}
.stirrup-row .narrow {
  width: 28px;
}
.stirrup-row .wide {
  width: 58px;
}
.dialog footer {
  display: flex;
  align-items: center;
  justify-content: space-between;
  height: 36px;
  padding: 0 7px;
  border-top: 1px solid #aca899;
  background: #e0ddcd;
}
.push {
  min-width: 62px;
  height: 20px;
  padding: 0 6px;
  border: 1px solid #003c74;
  border-radius: 3px;
  background: linear-gradient(#fff, #ecebe6);
  font-size: 12px;
}
.push:first-child {
  min-width: 70px;
  box-shadow: inset 0 0 0 2px #b4ccf4;
}

.callouts {
  position: absolute;
  left: 0;
  top: 0;
  width: 100%;
  height: 100%;
  pointer-events: none;
}
```
